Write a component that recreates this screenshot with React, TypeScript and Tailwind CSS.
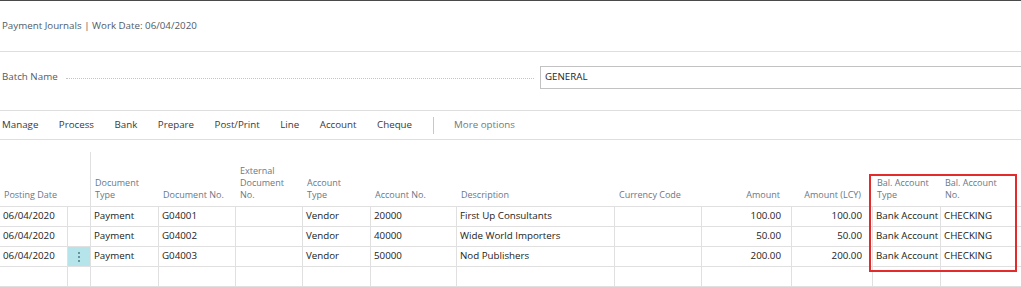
import React from "react";

const cols = "grid-cols-[68px_23px_68px_77px_67px_68px_86px_158px_87px_90px_81px_68px_80px]";

type Col = { h: string[]; right?: boolean };
const headers: Col[] = [
  { h: ["Posting Date"] },
  { h: [] },
  { h: ["Document", "Type"] },
  { h: ["Document No."] },
  { h: ["External", "Document", "No."] },
  { h: ["Account", "Type"] },
  { h: ["Account No."] },
  { h: ["Description"] },
  { h: ["Currency Code"] },
  { h: ["Amount"], right: true },
  { h: ["Amount (LCY)"], right: true },
  { h: ["Bal. Account", "Type"] },
  { h: ["Bal. Account", "No."] },
];

const rows: string[][] = [
  ["06/04/2020", "", "Payment", "G04001", "", "Vendor", "20000", "First Up Consultants", "", "100.00", "100.00", "Bank Account", "CHECKING"],
  ["06/04/2020", "", "Payment", "G04002", "", "Vendor", "40000", "Wide World Importers", "", "50.00", "50.00", "Bank Account", "CHECKING"],
  ["06/04/2020", "menu", "Payment", "G04003", "", "Vendor", "50000", "Nod Publishers", "", "200.00", "200.00", "Bank Account", "CHECKING"],
  ["", "", "", "", "", "", "", "", "", "", "", "", ""],
];

export default function App() {
  return (
    <div
      className="relative w-[1021px] h-[287px] overflow-hidden bg-white"
      style={{ fontFamily: '"Open Sans", "Noto Sans", sans-serif' }}
    >
      <div className="h-[1px] bg-[#4a4a4a]" />
      <div className="h-[50px] flex items-center pl-[2px] text-[9.75px] text-[#505b68]">
        Payment Journals | Work Date: 06/04/2020
      </div>
      <div className="h-[1px] bg-[#dedede]" />
      <div className="h-[58px] pt-[14px]">
        <div className="flex items-center h-[23px]">
          <div className="flex items-center w-[540px] pl-[2px] text-[9.75px] text-[#505b68]">
            <span>Batch Name</span>
            <span className="flex-1 ml-[8px] mr-[6px] border-b border-dotted border-[#c4c4c4] translate-y-[1px]" />
          </div>
          <div className="flex-1 h-[23px] border border-r-0 border-[#c2c2c2] flex items-center pl-[4px] text-[9.75px] text-[#262626]">
            GENERAL
          </div>
        </div>
      </div>
      <div className="h-[1px] bg-[#dedede]" />
      <div className="h-[28px] flex items-center pl-[2px] text-[9.75px] text-[#3a3a3a] gap-[20.5px]">
        <span>Manage</span>
        <span>Process</span>
        <span>Bank</span>
        <span>Prepare</span>
        <span>Post/Print</span>
        <span>Line</span>
        <span>Account</span>
        <span>Cheque</span>
        <span className="w-[1px] h-[17px] bg-[#c8c8c8]" />
        <span className="text-[#787878]">More options</span>
      </div>
      <div className="h-[1px] bg-[#dedede]" />

      <div className="mt-[12px]">
        <div className={`grid ${cols} h-[55px] border-b border-[#e0e0e0]`}>
          {headers.map((c, i) => (
            <div
              key={i}
              className={`flex flex-col justify-end pb-[5px] text-[9px] leading-[12px] text-[#6b7785] ${
                c.right ? "items-end pr-[12px]" : "pl-[4px]"
              } ${i === 1 ? "border-r border-[#e0e0e0]" : ""}`}
            >
              {c.h.map((t, j) => (
                <span key={j} className="whitespace-nowrap">
                  {t}
                </span>
              ))}
            </div>
          ))}
        </div>
        {rows.map((r, ri) => (
          <div key={ri} className={`grid ${cols} h-[20px]`}>
            {r.map((v, ci) => {
              const right = headers[ci].right;
              if (v === "menu") {
                return (
                  <div
                    key={ci}
                    className="bg-[#b5e5ea] border-r border-b border-[#e0e0e0] flex flex-col items-center justify-center gap-[2px]"
                  >
                    <span className="w-[2px] h-[2px] rounded-full bg-[#4f7a80]" />
                    <span className="w-[2px] h-[2px] rounded-full bg-[#4f7a80]" />
                    <span className="w-[2px] h-[2px] rounded-full bg-[#4f7a80]" />
                  </div>
                );
              }
              return (
                <div
                  key={ci}
                  className={`border-b border-[#e0e0e0] ${ci < 12 ? "border-r" : ""} flex items-center whitespace-nowrap overflow-hidden text-[9.75px] text-[#222] ${
                    right ? "justify-end pr-[10px]" : "pl-[3px]"
                  }`}
                >
                  {v}
                </div>
              );
            })}
          </div>
        ))}
      </div>

      <div className="absolute left-[869px] top-[174px] w-[148px] h-[98px] border-2 border-[#e42b2b]" />
    </div>
  );
}
